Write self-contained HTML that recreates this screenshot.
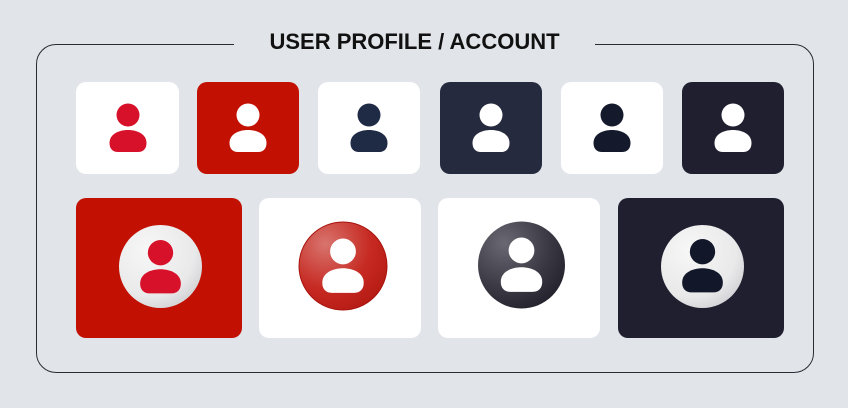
<!DOCTYPE html>
<html><head><meta charset="utf-8"><style>
body{margin:0;width:848px;height:408px;background:#e1e4e9;position:relative;overflow:hidden;font-family:"Liberation Sans",sans-serif}
.box{position:absolute;left:36px;top:44px;width:778px;height:329px;border:1px solid #2a2a35;border-radius:20px;box-sizing:border-box}
.gap{position:absolute;left:234px;top:38px;width:361px;height:12px;background:#e1e4e9}
.title{position:absolute;left:234px;width:361px;top:29px;text-align:center;font-size:22px;font-weight:bold;color:#111}
.t{position:absolute;border-radius:10px}
svg{position:absolute;left:0;top:0}
</style></head><body>
<svg width="0" height="0" style="position:absolute"><defs>
<g id="u"><circle cx="0" cy="-13" r="11.5"/><path d="M-18.5 15 C-18.5 6 -9 2 0 2 C9 2 18.5 6 18.5 15 C18.5 21 15 24 10 24 L-10 24 C-15 24 -18.5 21 -18.5 15Z"/></g>
<radialGradient id="wg" cx="0.35" cy="0.3" r="0.8"><stop offset="0" stop-color="#f7f7f7"/><stop offset="0.7" stop-color="#e9e9ea"/><stop offset="1" stop-color="#cfcfd3"/></radialGradient>
<radialGradient id="rg" cx="0.3" cy="0.25" r="0.85"><stop offset="0" stop-color="#d8746e"/><stop offset="0.6" stop-color="#c62a22"/><stop offset="1" stop-color="#b51a12"/></radialGradient>
<radialGradient id="dg" cx="0.3" cy="0.25" r="0.85"><stop offset="0" stop-color="#6a6872"/><stop offset="0.6" stop-color="#3a3944"/><stop offset="1" stop-color="#22212b"/></radialGradient>
</defs></svg>
<div class="box"></div><div class="gap"></div>
<div class="title">USER PROFILE / ACCOUNT</div>

<div class="t" style="left:76px;top:82px;width:103px;height:92px;background:#fff"><svg width="103" height="92"><use href="#u" x="52" y="46" fill="#d8112a"/></svg></div>
<div class="t" style="left:197px;top:82px;width:102px;height:92px;background:#c21103"><svg width="102" height="92"><use href="#u" x="51" y="46" fill="#fff"/></svg></div>
<div class="t" style="left:318px;top:82px;width:102px;height:92px;background:#fff"><svg width="102" height="92"><use href="#u" x="51" y="46" fill="#1f2a45"/></svg></div>
<div class="t" style="left:440px;top:82px;width:102px;height:92px;background:#262a3e"><svg width="102" height="92"><use href="#u" x="51" y="46" fill="#fff"/></svg></div>
<div class="t" style="left:561px;top:82px;width:102px;height:92px;background:#fff"><svg width="102" height="92"><use href="#u" x="51" y="46" fill="#141a2c"/></svg></div>
<div class="t" style="left:682px;top:82px;width:102px;height:92px;background:#1f1f30"><svg width="102" height="92"><use href="#u" x="51" y="46" fill="#fff"/></svg></div>

<div class="t" style="left:76px;top:198px;width:166px;height:140px;background:#c21103"><svg width="166" height="140"><circle cx="84.5" cy="68.5" r="41.5" fill="url(#wg)"/><g transform="translate(84.5 69) scale(1.1)"><use href="#u" fill="#d8112a"/></g></svg></div>
<div class="t" style="left:259px;top:198px;width:162px;height:140px;background:#fff"><svg width="162" height="140"><circle cx="84" cy="68" r="44" fill="url(#rg)" stroke="#a8140e" stroke-width="1"/><g transform="translate(84 68) scale(1.12)"><use href="#u" fill="#fff"/></g></svg></div>
<div class="t" style="left:438px;top:198px;width:162px;height:140px;background:#fff"><svg width="162" height="140"><circle cx="83.5" cy="67" r="43.5" fill="url(#dg)"/><g transform="translate(83.5 67) scale(1.12)"><use href="#u" fill="#fff"/></g></svg></div>
<div class="t" style="left:618px;top:198px;width:166px;height:140px;background:#1f1f30"><svg width="166" height="140"><circle cx="84.5" cy="68.5" r="41.5" fill="url(#wg)"/><g transform="translate(84.5 68) scale(1.1)"><use href="#u" fill="#121829"/></g></svg></div>
</body></html>
